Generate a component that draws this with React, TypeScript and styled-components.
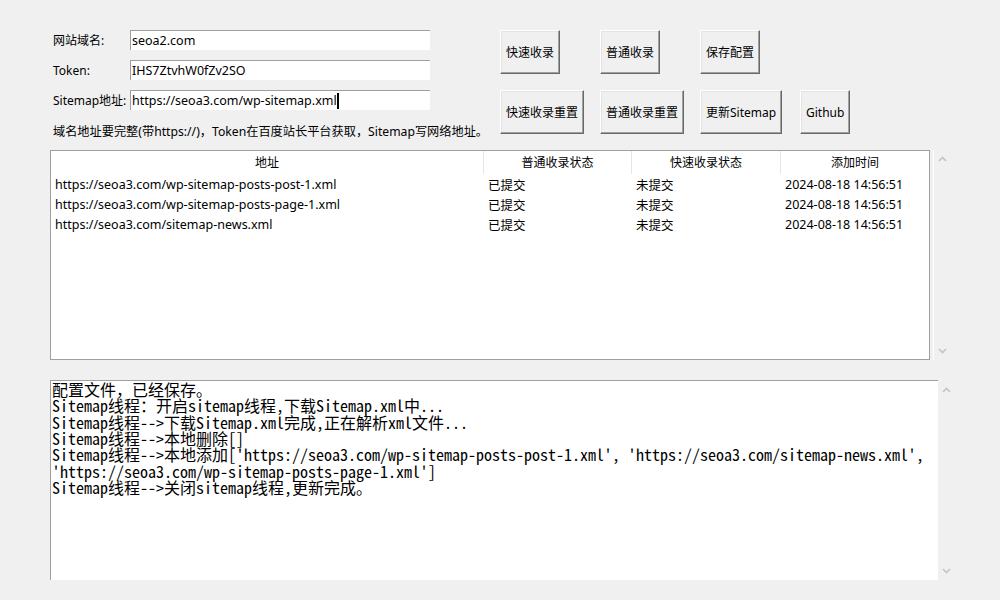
import React from "react";
import styled, { createGlobalStyle } from "styled-components";

const Global = createGlobalStyle`
  html, body { margin: 0; padding: 0; background: #f0f0f0; }
  #root { width: 1000px; height: 600px; }
`;

const UI_FONT = `"Noto Sans", "Noto Sans CJK SC", sans-serif`;

const Page = styled.div`
  box-sizing: border-box;
  width: 1000px;
  height: 600px;
  background: #f0f0f0;
  padding: 30px 0 0 50px;
  font-family: ${UI_FONT};
  font-size: 12px;
  color: #000;
  display: flex;
  flex-direction: column;
`;

const Top = styled.div`
  display: flex;
  height: 120px;
`;

const Form = styled.div`
  width: 450px;
  padding-left: 3px;
  box-sizing: border-box;
`;

const FieldGrid = styled.div`
  display: grid;
  grid-template-columns: 77px 300px;
  grid-auto-rows: 20px;
  row-gap: 10px;
`;

const Label = styled.div`
  display: flex;
  align-items: center;
  white-space: nowrap;
  line-height: 20px;
  padding-top: 2px;
`;

const Input = styled.div`
  box-sizing: border-box;
  height: 20px;
  background: #fff;
  border-top: 1px solid #a0a0a0;
  border-left: 1px solid #a0a0a0;
  padding: 0 1px;
  display: flex;
  align-items: center;
  white-space: nowrap;
  font-size: 12.5px;
`;

const Caret = styled.span`
  display: inline-block;
  width: 2px;
  height: 16px;
  background: #000;
`;

const Hint = styled.div`
  margin-top: 14px;
  line-height: 16px;
  white-space: nowrap;
  font-size: 12.2px;
`;

const ButtonGrid = styled.div`
  display: grid;
  grid-template-columns: repeat(4, 100px);
  grid-auto-rows: 44px;
  row-gap: 16px;
  justify-items: start;
`;

const Btn = styled.div<{ $col?: number }>`
  box-sizing: border-box;
  height: 44px;
  padding: 0 5px;
  display: flex;
  align-items: center;
  justify-content: center;
  background: #f0f0f0;
  border-top: 1px solid #fff;
  border-left: 1px solid #fff;
  border-right: 1px solid #696969;
  border-bottom: 1px solid #696969;
  box-shadow: inset -1px -1px 0 #a0a0a0, inset 1px 1px 0 #e3e3e3;
  white-space: nowrap;
  ${(p) => (p.$col ? `grid-column: ${p.$col};` : "")}
`;

const TableRow = styled.div`
  display: flex;
  height: 210px;
`;

const TableBox = styled.div`
  box-sizing: border-box;
  width: 880px;
  height: 210px;
  background: #fff;
  border: 1px solid #a0a0a0;
`;

const COLS = [432, 148, 149, 149];

const HeadRow = styled.div`
  display: flex;
  height: 23px;
`;

const HeadCell = styled.div<{ $w: number; $first?: boolean }>`
  box-sizing: border-box;
  width: ${(p) => p.$w}px;
  display: flex;
  align-items: center;
  justify-content: center;
  border-left: ${(p) => (p.$first ? "none" : "1px solid #e5e5e5")};
  padding-bottom: 1px;
`;

const DataRow = styled.div`
  display: flex;
  height: 20px;
`;

const DataCell = styled.div<{ $w: number; $first?: boolean }>`
  box-sizing: border-box;
  width: ${(p) => p.$w}px;
  padding-left: ${(p) => (p.$first ? 4 : 5)}px;
  display: flex;
  align-items: center;
  white-space: nowrap;
  overflow: hidden;
  font-size: 12.5px;
`;

const Scrollbar = styled.div<{ $gap: number; $edge?: boolean; $up: number; $down: number }>`
  box-sizing: border-box;
  width: 17px;
  margin-left: ${(p) => p.$gap}px;
  border-left: ${(p) => (p.$edge ? "1px solid #fff" : "none")};
  display: flex;
  flex-direction: column;
  justify-content: space-between;
  align-items: center;
  padding: ${(p) => p.$up}px 0 ${(p) => p.$down}px;
`;

const Arrow = ({ down }: { down?: boolean }) => (
  <svg width="9" height="6" viewBox="0 0 9 6">
    <polyline
      points={down ? "1,1 4.5,4.5 8,1" : "1,5 4.5,1.5 8,5"}
      fill="none"
      stroke="#c4c4c4"
      strokeWidth="1.6"
    />
  </svg>
);

const LogRow = styled.div`
  display: flex;
  height: 200px;
  margin-top: 20px;
`;

const LogBox = styled.div`
  box-sizing: border-box;
  width: 888px;
  height: 200px;
  background: #fff;
  border-top: 1px solid #a0a0a0;
  border-left: 1px solid #a0a0a0;
  padding: 0 0 0 1px;
  font-family: "Noto Sans Mono CJK SC", "Noto Sans CJK SC", monospace;
  font-size: 16px;
  line-height: 16.33px;
  white-space: pre;
  overflow: hidden;
`;

const LogLine = styled.div`
  height: 16.33px;
`;

const rows = [
  "https://seoa3.com/wp-sitemap-posts-post-1.xml",
  "https://seoa3.com/wp-sitemap-posts-page-1.xml",
  "https://seoa3.com/sitemap-news.xml",
];

const logs = [
  "配置文件，已经保存。",
  "Sitemap线程：开启sitemap线程,下载Sitemap.xml中...",
  "Sitemap线程-->下载Sitemap.xml完成,正在解析xml文件...",
  "Sitemap线程-->本地删除[]",
  "Sitemap线程-->本地添加['https://seoa3.com/wp-sitemap-posts-post-1.xml', 'https://seoa3.com/sitemap-news.xml', ",
  "'https://seoa3.com/wp-sitemap-posts-page-1.xml']",
  "Sitemap线程-->关闭sitemap线程,更新完成。",
];

export default function App() {
  const heads = ["地址", "普通收录状态", "快速收录状态", "添加时间"];
  return (
    <>
      <Global />
      <Page>
        <Top>
          <Form>
            <FieldGrid>
              <Label>网站域名:</Label>
              <Input>seoa2.com</Input>
              <Label>Token:</Label>
              <Input>IHS7ZtvhW0fZv2SO</Input>
              <Label>Sitemap地址:</Label>
              <Input>
                https://seoa3.com/wp-sitemap.xml
                <Caret />
              </Input>
            </FieldGrid>
            <Hint>域名地址要完整(带https://)，Token在百度站长平台获取，Sitemap写网络地址。</Hint>
          </Form>
          <ButtonGrid>
            <Btn>快速收录</Btn>
            <Btn>普通收录</Btn>
            <Btn>保存配置</Btn>
            <Btn $col={1}>快速收录重置</Btn>
            <Btn>普通收录重置</Btn>
            <Btn>更新Sitemap</Btn>
            <Btn>Github</Btn>
          </ButtonGrid>
        </Top>
        <TableRow>
          <TableBox>
            <HeadRow>
              {heads.map((h, i) => (
                <HeadCell key={h} $w={COLS[i]} $first={i === 0}>
                  {h}
                </HeadCell>
              ))}
            </HeadRow>
            {rows.map((r) => (
              <DataRow key={r}>
                <DataCell $w={COLS[0]} $first>
                  {r}
                </DataCell>
                <DataCell $w={COLS[1]}>已提交</DataCell>
                <DataCell $w={COLS[2]}>未提交</DataCell>
                <DataCell $w={COLS[3]}>2024-08-18 14:56:51</DataCell>
              </DataRow>
            ))}
          </TableBox>
          <Scrollbar $gap={3} $edge $up={6} $down={6}>
            <Arrow />
            <Arrow down />
          </Scrollbar>
        </TableRow>
        <LogRow>
          <LogBox>
            {logs.map((l, i) => (
              <LogLine key={i}>{l}</LogLine>
            ))}
          </LogBox>
          <Scrollbar $gap={0} $up={7} $down={6}>
            <Arrow />
            <Arrow down />
          </Scrollbar>
        </LogRow>
      </Page>
    </>
  );
}
